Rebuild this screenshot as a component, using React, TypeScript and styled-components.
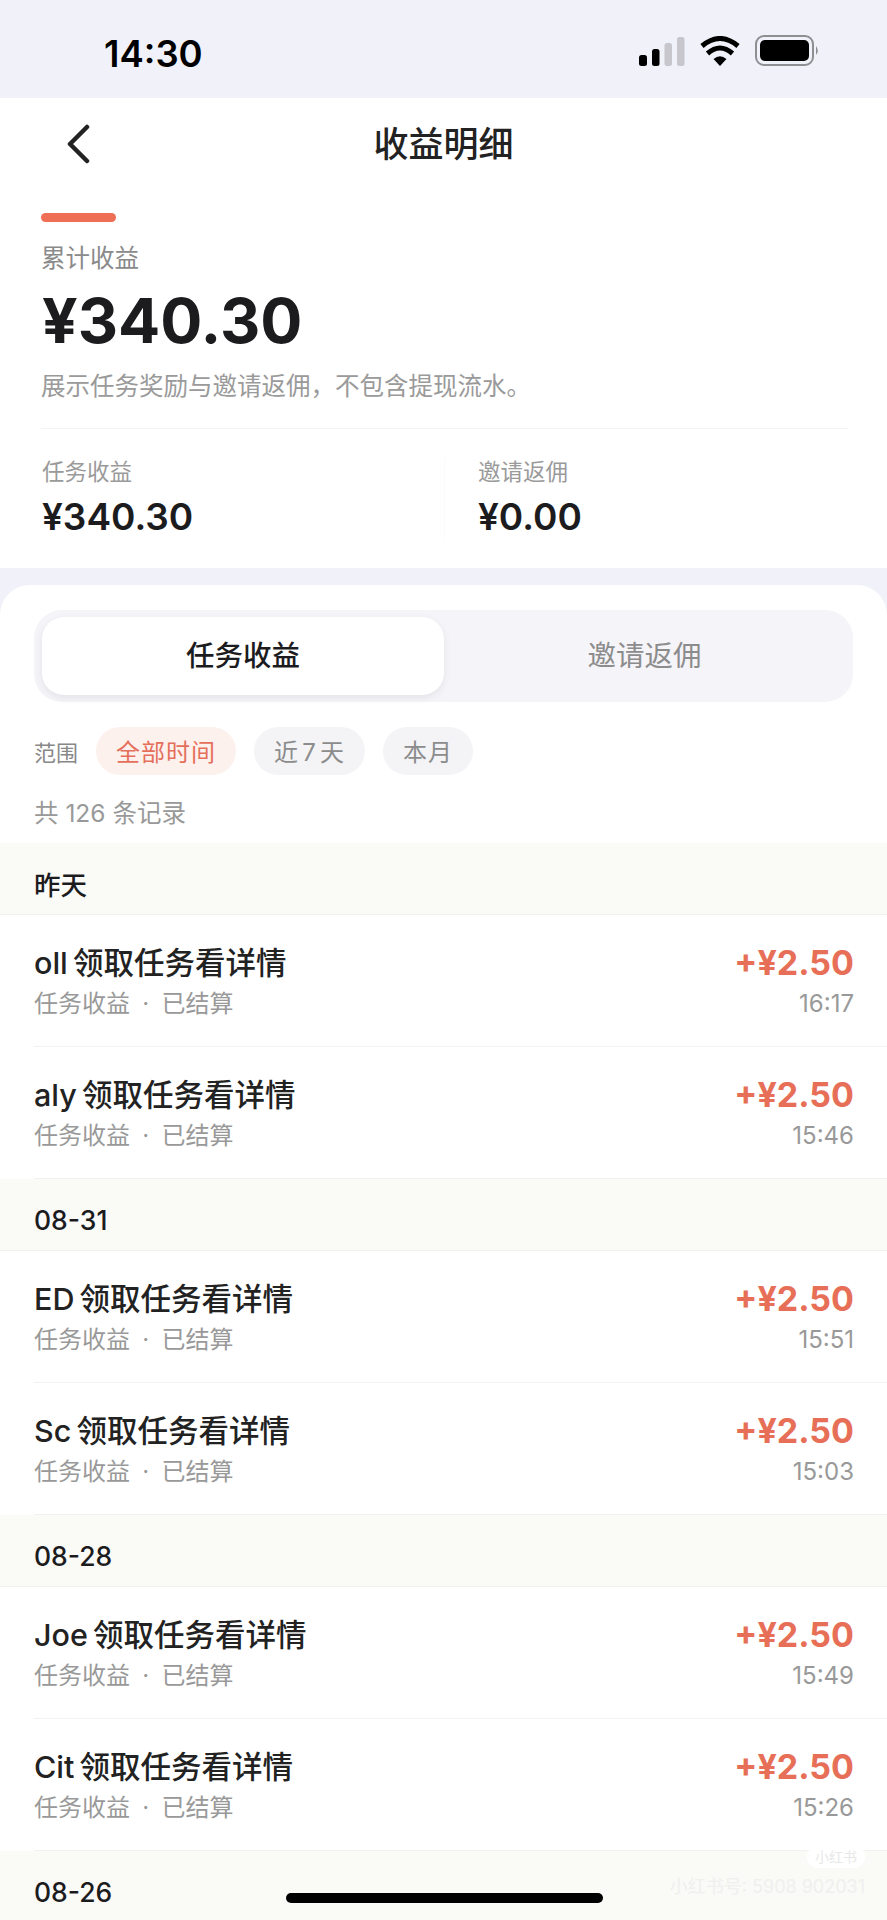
import styled, { createGlobalStyle } from "styled-components";

const GlobalStyle = createGlobalStyle`
  * { box-sizing: border-box; }
  html, body { margin: 0; padding: 0; background: #f1f1f9; }
  body { font-family: Inter, "Noto Sans CJK SC", sans-serif; color: #1c1c1e; }
`;

type Record = { name: string; time: string };
type Group = { date: string; records: Record[] };

const groups: Group[] = [
  { date: "昨天", records: [{ name: "oll", time: "16:17" }, { name: "aly", time: "15:46" }] },
  { date: "08-31", records: [{ name: "ED", time: "15:51" }, { name: "Sc", time: "15:03" }] },
  { date: "08-28", records: [{ name: "Joe", time: "15:49" }, { name: "Cit", time: "15:26" }] },
  { date: "08-26", records: [] },
];

const App = () => {
  return (
    <Page>
      <GlobalStyle />
      <StatusBar>
        <Clock>14:30</Clock>
        <StatusIcons>
          <svg width="46" height="29" viewBox="0 0 46 29">
            <rect x="0" y="18" width="8" height="11" rx="2.5" fill="#000" />
            <rect x="13" y="12" width="7.5" height="17" rx="2.5" fill="#000" />
            <rect x="25.5" y="6" width="7.5" height="23" rx="2.5" fill="#c6c6cc" />
            <rect x="38" y="0" width="7.5" height="29" rx="2.5" fill="#c6c6cc" />
          </svg>
          <svg width="40" height="30" viewBox="0 0 40 30">
            <path d="M20 30 L13.5 23 Q20 17.5 26.5 23 Z" fill="#000" />
            <path d="M7.5 17.5 Q20 6.5 32.5 17.5" fill="none" stroke="#000" strokeWidth="5" />
            <path d="M2 10 Q20 -5 38 10" fill="none" stroke="#000" strokeWidth="5" />
          </svg>
          <svg width="65" height="31" viewBox="0 0 65 31">
            <rect x="1" y="1" width="57" height="29" rx="8" fill="none" stroke="#8e8e93" strokeWidth="2" />
            <rect x="5" y="5" width="49" height="21" rx="5" fill="#000" />
            <path d="M61 11 Q64.5 15.5 61 20 Z" fill="#8e8e93" />
          </svg>
        </StatusIcons>
      </StatusBar>

      <Nav>
        <BackIcon width="24" height="40" viewBox="0 0 24 40">
          <path d="M21 3 L4 20 L21 37" fill="none" stroke="#222" strokeWidth="4.5" strokeLinecap="round" strokeLinejoin="round" />
        </BackIcon>
        <NavTitle>收益明细</NavTitle>
      </Nav>

      <Hero>
        <Accent />
        <HeroLabel>累计收益</HeroLabel>
        <HeroAmount>¥340.30</HeroAmount>
        <HeroDesc>展示任务奖励与邀请返佣，不包含提现流水。</HeroDesc>
        <Stats>
          <Stat>
            <StatLabel>任务收益</StatLabel>
            <StatValue>¥340.30</StatValue>
          </Stat>
          <Stat $divided>
            <StatLabel>邀请返佣</StatLabel>
            <StatValue>¥0.00</StatValue>
          </Stat>
        </Stats>
      </Hero>

      <Sheet>
        <Tabs>
          <Tab $active>任务收益</Tab>
          <Tab>邀请返佣</Tab>
        </Tabs>
        <Filters>
          <FilterLabel>范围</FilterLabel>
          <Chip $active>全部时间</Chip>
          <Chip>近{"\u200a"}7{"\u200a"}天</Chip>
          <Chip>本月</Chip>
        </Filters>
        <Count>共 126 条记录</Count>

        {groups.map((group) => (
          <section key={group.date}>
            <DateHeader>{group.date}</DateHeader>
            {group.records.map((record) => (
              <Row key={record.name}>
                <RowLeft>
                  <RowTitle>{record.name} 领取任务看详情</RowTitle>
                  <RowSub>任务收益 · 已结算</RowSub>
                </RowLeft>
                <RowRight>
                  <Amount>+¥2.50</Amount>
                  <Time>{record.time}</Time>
                </RowRight>
              </Row>
            ))}
          </section>
        ))}
      </Sheet>

      <Watermark>
        <WatermarkBadge>小红书</WatermarkBadge>
        <WatermarkLine>小红书号: 5908 902031</WatermarkLine>
      </Watermark>
      <HomeIndicator />
    </Page>
  );
};

export default App;

const Page = styled.div`
  position: relative;
  width: 887px;
  height: 1920px;
  overflow: hidden;
  background: #f1f1f9;
`;

const StatusBar = styled.div`
  height: 98px;
  padding: 9px 67px 0 104px;
  display: flex;
  align-items: center;
  justify-content: space-between;
`;

const Clock = styled.div`
  font-size: 36.5px;
  font-weight: 600;
  line-height: 40px;
  color: #000;
`;

const StatusIcons = styled.div`
  display: flex;
  align-items: flex-end;
  gap: 15px;
  margin-top: -6px;
`;

const Nav = styled.div`
  position: relative;
  height: 92px;
  background: #fff;
  display: flex;
  align-items: center;
  justify-content: center;
`;

const BackIcon = styled.svg`
  position: absolute;
  left: 66px;
  top: 26px;
`;

const NavTitle = styled.h1`
  margin: 0;
  font-size: 35px;
  font-weight: 500;
  line-height: 44px;
  color: #222;
`;

const Hero = styled.div`
  background: #fff;
  padding: 23px 39px 29px 41px;
`;

const Accent = styled.div`
  width: 75px;
  height: 9px;
  border-radius: 5px;
  background: #ee6f56;
`;

const HeroLabel = styled.div`
  margin-top: 19px;
  font-size: 24.5px;
  line-height: 34px;
  color: #8a8a8a;
`;

const HeroAmount = styled.div`
  margin-top: 7px;
  margin-left: 1px;
  font-size: 62.5px;
  font-weight: 700;
  line-height: 76px;
  color: #1c1c1e;
`;

const HeroDesc = styled.div`
  margin-top: 11px;
  font-size: 24.5px;
  line-height: 34px;
  color: #9a9a9a;
`;

const Stats = styled.div`
  margin-top: 25px;
  padding-top: 28px;
  border-top: 1px solid #f4f4f4;
  display: grid;
  grid-template-columns: 403px 1fr;
`;

const Stat = styled.div<{ $divided?: boolean }>`
  padding-left: ${(p) => (p.$divided ? "33px" : "1px")};
  border-left: ${(p) => (p.$divided ? "1px solid #fbfbfb" : "none")};
`;

const StatLabel = styled.div`
  font-size: 22.5px;
  line-height: 30px;
  color: #9a9a9a;
`;

const StatValue = styled.div`
  margin-top: 8px;
  font-size: 37px;
  font-weight: 600;
  line-height: 44px;
  color: #1c1c1e;
`;

const Sheet = styled.div`
  margin-top: 17px;
  padding-top: 25px;
  background: #fff;
  border-radius: 30px 30px 0 0;
`;

const Tabs = styled.div`
  margin: 0 34px;
  height: 92px;
  padding: 7px 8px;
  display: grid;
  grid-template-columns: 402px 1fr;
  border-radius: 28px;
  background: #f4f4f9;
`;

const Tab = styled.div<{ $active?: boolean }>`
  padding-bottom: 5px;
  display: flex;
  align-items: center;
  justify-content: center;
  font-size: 28.5px;
  font-weight: ${(p) => (p.$active ? 500 : 400)};
  color: ${(p) => (p.$active ? "#1c1c1e" : "#8c8c8c")};
  background: ${(p) => (p.$active ? "#fff" : "transparent")};
  border-radius: 22px;
  box-shadow: ${(p) => (p.$active ? "0 3px 8px rgba(0, 0, 0, 0.07)" : "none")};
`;

const Filters = styled.div`
  margin-top: 25px;
  padding-left: 34px;
  display: flex;
  align-items: center;
  gap: 18px;
`;

const FilterLabel = styled.span`
  font-size: 22px;
  color: #888;
`;

const Chip = styled.span<{ $active?: boolean }>`
  height: 48px;
  padding: 0 20px 2px;
  display: flex;
  align-items: center;
  font-size: 24px;
  letter-spacing: 1px;
  border-radius: 24px;
  color: ${(p) => (p.$active ? "#e46f5a" : "#8c8c8c")};
  background: ${(p) => (p.$active ? "#fdf1ee" : "#f4f4f7")};
`;

const Count = styled.div`
  margin: 21px 0 13px;
  padding-left: 34px;
  font-size: 24.5px;
  line-height: 34px;
  color: #999;
`;

const DateHeader = styled.div`
  height: 72px;
  padding: 10px 34px 0;
  display: flex;
  align-items: center;
  font-size: 26.5px;
  font-weight: 500;
  color: #1c1c1e;
  background: #fafaf7;
  border-bottom: 1px solid #f1f1ee;
`;

const Row = styled.div`
  height: 132px;
  margin-left: 34px;
  padding: 28px 33px 0 0;
  display: flex;
  justify-content: space-between;
  border-bottom: 1px solid #f2f2f2;
  background: #fff;
`;

const RowLeft = styled.div`
  display: flex;
  flex-direction: column;
`;

const RowRight = styled.div`
  display: flex;
  flex-direction: column;
  align-items: flex-end;
`;

const RowTitle = styled.div`
  font-size: 30.5px;
  font-weight: 500;
  line-height: 40px;
  color: #222;
  word-spacing: -3px;
`;

const RowSub = styled.div`
  margin-top: 6px;
  font-size: 24px;
  line-height: 30px;
  word-spacing: 5.5px;
  color: #999;
`;

const Amount = styled.div`
  font-size: 34px;
  font-weight: 700;
  line-height: 40px;
  color: #e76f58;
`;

const Time = styled.div`
  margin-top: 6px;
  font-size: 24px;
  line-height: 30px;
  color: #999;
`;

const Watermark = styled.div`
  position: absolute;
  right: 22px;
  bottom: 24px;
  display: flex;
  flex-direction: column;
  align-items: flex-end;
  gap: 10px;
`;

const WatermarkBadge = styled.div`
  padding: 2px 8px;
  font-size: 14px;
  line-height: 18px;
  color: #e8e8e8;
  background: #fff;
  border-radius: 10px;
`;

const WatermarkLine = styled.div`
  font-size: 18px;
  line-height: 18px;
  color: #f0f0ee;
`;

const HomeIndicator = styled.div`
  position: absolute;
  left: 286px;
  bottom: 17px;
  width: 317px;
  height: 10px;
  border-radius: 5px;
  background: #000;
`;
